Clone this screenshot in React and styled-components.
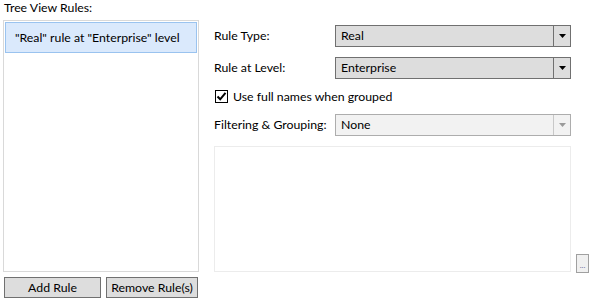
import React from "react"
import styled, { createGlobalStyle } from "styled-components"

const Global = createGlobalStyle`
  html, body {
    margin: 0;
    padding: 0;
    background: #ffffff;
  }
  body {
    font-family: "Lato", "Noto Sans", sans-serif;
    font-size: 12.3px;
    color: #000000;
  }
`

const Layout = styled.div`
  display: grid;
  grid-template-columns: 196px 357px 18px;
  column-gap: 15px;
  width: 594px;
  height: 303px;
  box-sizing: border-box;
  padding: 0 0 5px 3px;
`

const LeftColumn = styled.div`
  display: flex;
  flex-direction: column;
  height: 298px;
`

const Title = styled.div`
  height: 20px;
  line-height: 16px;
  padding-left: 1px;
`

const RuleList = styled.div`
  height: 252px;
  box-sizing: border-box;
  border: 1px solid #d9d9d9;
  padding: 1px 1px;
`

const RuleItem = styled.div`
  height: 31px;
  box-sizing: border-box;
  line-height: 29px;
  padding-left: 9px;
  background: ${p => (p.selected ? "#dae9fc" : "transparent")};
  border: 1px solid ${p => (p.selected ? "#9ac3ef" : "transparent")};
`

const ButtonRow = styled.div`
  display: flex;
  gap: 5px;
  margin-top: 5px;
  padding-left: 1px;
`

const Button = styled.button`
  height: 21px;
  width: ${p => p.w}px;
  box-sizing: border-box;
  border: 1px solid #707070;
  background: #dddddd;
  font-family: inherit;
  font-size: inherit;
  color: #000;
  padding: 0;
  line-height: 18px;
`

const RightColumn = styled.div`
  display: flex;
  flex-direction: column;
  gap: 10px;
  padding-top: 25px;
`

const FieldRow = styled.div`
  display: grid;
  grid-template-columns: 121px 236px;
  align-items: center;
  height: 22px;
`

const Label = styled.span`
  line-height: 16px;
  margin-top: -1px;
`

const Combo = styled.div`
  display: flex;
  height: 22px;
  box-sizing: border-box;
  border: 1px solid ${p => (p.disabled ? "#adadad" : "#707070")};
  background: ${p => (p.disabled ? "#f2f2f2" : "#dddddd")};
`

const ComboText = styled.span`
  flex: 1;
  padding-left: 5px;
  line-height: 20px;
`

const ComboArrow = styled.span`
  width: 16px;
  display: flex;
  align-items: center;
  justify-content: center;
  border-left: 1px solid ${p => (p.disabled ? "#c8c8c8" : "#707070")};
`

const CheckRow = styled.label`
  display: flex;
  align-items: center;
  gap: 5px;
  height: 15px;
  padding-left: 1px;
`

const Box = styled.span`
  width: 13px;
  height: 13px;
  box-sizing: border-box;
  border: 1px solid #000;
  background: #fff;
  display: flex;
  align-items: center;
  justify-content: center;
`

const BottomRow = styled.div`
  display: flex;
  align-items: flex-end;
`

const TextArea = styled.div`
  width: 357px;
  height: 126px;
  box-sizing: border-box;
  border: 1px solid #ececec;
  background: #fff;
`

const SideColumn = styled.div`
  display: flex;
  align-items: flex-end;
  padding-bottom: 25px;
`

const EllipsisButton = styled.div`
  width: 13px;
  height: 19px;
  margin-left: -10px;
  box-sizing: border-box;
  border: 1px solid #a0a0a0;
  background: #f0f0f0;
  display: flex;
  align-items: flex-end;
  justify-content: center;
  padding-bottom: 3px;
  font-size: 8px;
  line-height: 1;
  color: #6a6a9a;
  overflow: hidden;
`

const Arrow = ({ color }) => (
  <svg width="7" height="4" viewBox="0 0 7 4">
    <path d="M0 0H7L3.5 4Z" fill={color} />
  </svg>
)

const Dropdown = ({ value, disabled }) => (
  <Combo disabled={disabled}>
    <ComboText>{value}</ComboText>
    <ComboArrow disabled={disabled}>
      <Arrow color={disabled ? "#9a9a9a" : "#000"} />
    </ComboArrow>
  </Combo>
)

const App = () => (
  <>
    <Global />
    <Layout>
      <LeftColumn>
        <Title>Tree View Rules:</Title>
        <RuleList>
          <RuleItem selected>"Real" rule at "Enterprise" level</RuleItem>
        </RuleList>
        <ButtonRow>
          <Button w={97}>Add Rule</Button>
          <Button w={92}>Remove Rule(s)</Button>
        </ButtonRow>
      </LeftColumn>
      <RightColumn>
        <FieldRow>
          <Label>Rule Type:</Label>
          <Dropdown value="Real" />
        </FieldRow>
        <FieldRow>
          <Label>Rule at Level:</Label>
          <Dropdown value="Enterprise" />
        </FieldRow>
        <CheckRow>
          <Box>
            <svg width="11" height="11" viewBox="0 0 11 11">
              <path d="M1.5 5.5L4.2 8.3L9.5 1.8" stroke="#000" strokeWidth="2" fill="none" />
            </svg>
          </Box>
          <span>Use full names when grouped</span>
        </CheckRow>
        <FieldRow>
          <Label>Filtering &amp; Grouping:</Label>
          <Dropdown value="None" disabled />
        </FieldRow>
        <BottomRow>
          <TextArea />
        </BottomRow>
      </RightColumn>
      <SideColumn>
        <EllipsisButton>...</EllipsisButton>
      </SideColumn>
    </Layout>
  </>
)

export default App
